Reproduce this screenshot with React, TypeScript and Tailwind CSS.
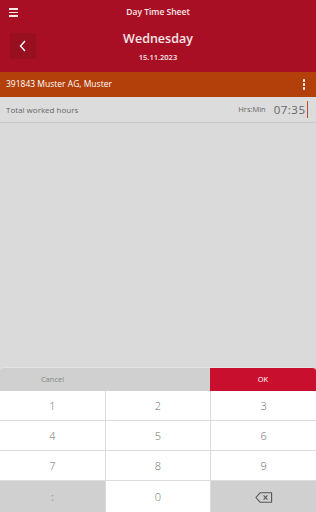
import React from 'react';

const keys = ['1', '2', '3', '4', '5', '6', '7', '8', '9'];

function Backspace() {
  return (
    <svg width="18" height="11" viewBox="0 0 18 11" fill="none" stroke="#555" strokeWidth="1.1">
      <path d="M5 0.8 H16.6 V10.2 H5 L0.9 5.5 Z" strokeLinejoin="round" />
      <path d="M8.6 3.4 L12.4 7.6 M12.4 3.4 L8.6 7.6" />
    </svg>
  );
}

export default function App() {
  return (
    <div className="w-[316px] h-[512px] flex flex-col bg-[#dadada] overflow-hidden" style={{ fontFamily: '"Open Sans", sans-serif' }}>
      {/* Header */}
      <div className="h-[72px] bg-[#a80f24] flex flex-col text-white">
        <div className="h-[24px] flex items-center relative">
          <div className="absolute left-[9px] top-[8px] flex flex-col gap-[2px]">
            <div className="w-[9px] h-[1.5px] bg-white/90" />
            <div className="w-[9px] h-[1.5px] bg-white/90" />
            <div className="w-[9px] h-[1.5px] bg-white/90" />
          </div>
          <div className="flex-1 text-center text-[8.5px] font-semibold text-white/90">Day Time Sheet</div>
        </div>
        <div className="flex-1 relative flex flex-col items-center">
          <div className="absolute left-[10px] top-[9px] w-[26px] h-[26px] bg-[#98101f] flex items-center justify-center">
            <svg width="8" height="12" viewBox="0 0 8 12" fill="none" stroke="white" strokeWidth="1.4">
              <path d="M6 1 L1.5 6 L6 11" />
            </svg>
          </div>
          <div className="text-[12.5px] font-semibold leading-none mt-[9px] text-white/90">Wednesday</div>
          <div className="text-[7.5px] font-semibold leading-none mt-[8px] text-white/90">15.11.2023</div>
        </div>
      </div>

      {/* Customer bar */}
      <div className="h-[25px] bg-[#b3400b] flex items-center justify-between pl-[6px] pr-[11px] text-white">
        <span className="text-[8.5px]">391843 Muster AG, Muster</span>
        <div className="flex flex-col gap-[1.5px]">
          <div className="w-[2.5px] h-[2.5px] rounded-full bg-white" />
          <div className="w-[2.5px] h-[2.5px] rounded-full bg-white" />
          <div className="w-[2.5px] h-[2.5px] rounded-full bg-white" />
        </div>
      </div>

      {/* Row */}
      <div className="h-[26px] flex items-center pl-[6px] pr-[8px] border-b border-[#c8c8c8] bg-[#dcdcdc]">
        <span className="text-[8px] text-[#666]">Total worked hours</span>
        <span className="ml-auto text-[7.5px] text-[#666]">Hrs:Min</span>
        <span className="ml-[8px] text-[11.5px] text-[#666] tracking-[0.5px]">07:35</span>
        <div className="w-[1.5px] h-[17px] bg-[#c0501e] ml-[1px]" />
      </div>

      <div className="flex-1" />

      {/* Keypad */}
      <div className="flex flex-col">
        <div className="h-[24px] flex rounded-t-[4px] overflow-hidden bg-[#d0d0d0] border-t border-[#e2e2e2]">
          <div className="w-[105px] flex items-center justify-center text-[7.5px] text-[#888]">Cancel</div>
          <div className="w-[105px]" />
          <div className="flex-1 bg-[#c8102e] flex items-center justify-center text-[7.5px] text-white">OK</div>
        </div>
        <div className="grid grid-cols-3 bg-[#dcdcdc] gap-x-px gap-y-px">
          {keys.map((k) => (
            <div key={k} className="h-[29px] pt-[2px] bg-white flex items-center justify-center text-[11px] font-light text-[#707070]">
              {k}
            </div>
          ))}
          <div className="h-[31px] pt-[2px] bg-[#d0d0d0] flex items-center justify-center text-[11px] text-[#999]">:</div>
          <div className="h-[31px] pt-[2px] bg-white flex items-center justify-center text-[11px] font-light text-[#707070]">0</div>
          <div className="h-[31px] pt-[2px] bg-[#d0d0d0] flex items-center justify-center">
            <Backspace />
          </div>
        </div>
      </div>
    </div>
  );
}
